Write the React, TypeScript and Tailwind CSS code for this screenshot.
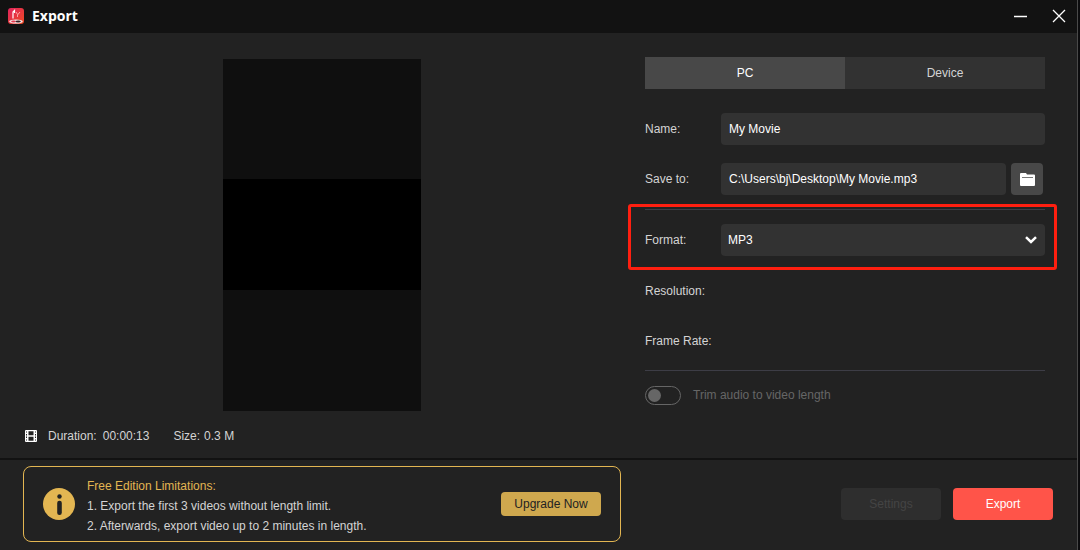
import React, { useState } from 'react';

const AppLogo: React.FC = () => (
  <svg width="16" height="16" viewBox="0 0 16 16" aria-hidden="true">
    <defs>
      <linearGradient id="logo-bg" x1="0" y1="0" x2="1" y2="1">
        <stop offset="0" stopColor="#e0245e" />
        <stop offset="1" stopColor="#ee4a22" />
      </linearGradient>
    </defs>
    <rect width="16" height="16" rx="3" fill="url(#logo-bg)" />
    <path d="M5 10.500V4L6.500 2.500V5" fill="none" stroke="#fff" strokeWidth="1.200" />
    <path d="M8 4l1.500 2.500M12 4l-2.500 3v2" fill="none" stroke="#ffb0b0" strokeWidth="0.900" />
    <ellipse cx="8" cy="13.500" rx="6.800" ry="2" fill="#f4e6e6" />
    <ellipse cx="5.500" cy="13.500" rx="2.400" ry="1" fill="#e53950" />
    <ellipse cx="10.200" cy="13.500" rx="2.600" ry="1" fill="#3a2024" />
  </svg>
);

const FilmIcon: React.FC = () => (
  <svg width="12" height="12" viewBox="0 0 12 12" aria-hidden="true">
    <rect width="12" height="12" rx="1" fill="#fff" />
    <path
      d="M1 1.500h1v1H1zM1 4h1v1.500H1zM1 6.500h1V8H1zM1 9.500h1v1H1zM10 1.500h1v1h-1zM10 4h1v1.500h-1zM10 6.500h1V8h-1zM10 9.500h1v1h-1zM3.500 1.200h5v4.100h-5zM3.500 6.700h5v4.100h-5z"
      fill="#222"
    />
  </svg>
);

const FolderIcon: React.FC = () => (
  <svg width="15" height="13" viewBox="0 0 15 13" aria-hidden="true">
    <path d="M1 0h5l1 1.500h7a1 1 0 0 1 1 1V12a1 1 0 0 1-1 1H1a1 1 0 0 1-1-1V1a1 1 0 0 1 1-1z" fill="#fff" />
    <path d="M2 4.500h11" stroke="#777" strokeWidth="1" />
  </svg>
);

const InfoIcon: React.FC = () => (
  <svg width="32" height="32" viewBox="0 0 32 32" aria-hidden="true">
    <circle cx="16" cy="16" r="16" fill="#e3b652" />
    <circle cx="16.500" cy="8.500" r="2.200" fill="#222" />
    <rect x="14.200" y="12.800" width="4.600" height="14.200" rx="2.200" fill="#222" />
  </svg>
);

const App: React.FC = () => {
  const [target, setTarget] = useState('PC');
  const [name, setName] = useState('My Movie');
  const [path, setPath] = useState('C:\\Users\\bj\\Desktop\\My Movie.mp3');

  return (
    <div className="flex min-h-screen bg-[#0c0c0e] pr-[2px] font-['Liberation_Sans',Arial,sans-serif] text-[12px] leading-5 text-[#d4d4d4]">
      <div className="flex flex-1 flex-col border-r border-[#4a4a4a] bg-[#222222]">
        {/* Title bar */}
        <header className="flex h-[33px] items-center bg-[#121212] pr-[6px] pb-[2px] pl-2">
          <AppLogo />
          <h1 className="ml-2 flex-1 font-['Open_Sans','Noto_Sans',sans-serif] text-[14px] font-bold text-white">Export</h1>
          <button aria-label="Minimize" className="flex size-6 items-center justify-center">
            <svg width="14" height="14" viewBox="0 0 14 14">
              <path d="M0 7.500h13" stroke="#fff" strokeWidth="1.500" />
            </svg>
          </button>
          <button aria-label="Close" className="ml-[14px] flex size-6 items-center justify-center">
            <svg width="14" height="14" viewBox="0 0 14 14">
              <path d="M1 1l12 12M13 1L1 13" stroke="#fff" strokeWidth="1.300" />
            </svg>
          </button>
        </header>

        <main className="flex flex-1 border-b-2 border-[#121212]">
          {/* Preview */}
          <section className="flex flex-1 flex-col pt-[26px] pr-[2px] pb-3">
            <div className="h-[352px] w-[198px] self-center bg-[#0f0f0f] pt-[120px]">
              <div className="h-[111px] bg-black" />
            </div>
            <div className="mt-auto flex items-center pl-[25px]">
              <FilmIcon />
              <span className="ml-[11px]">Duration:</span>
              <span className="ml-[6px]">00:00:13</span>
              <span className="ml-6">Size:</span>
              <span className="ml-1">0.3 M</span>
            </div>
          </section>

          {/* Settings */}
          <section className="mr-8 w-[400px] pt-6">
            <div className="grid grid-cols-2">
              {['PC', 'Device'].map((item) => (
                <button
                  key={item}
                  onClick={() => setTarget(item)}
                  className={target === item ? 'h-8 bg-[#484848] text-white' : 'h-8 bg-[#323232]'}
                >
                  {item}
                </button>
              ))}
            </div>

            <div className="mt-6 flex items-center">
              <label htmlFor="name" className="w-[76px]">Name:</label>
              <input
                id="name"
                value={name}
                onChange={(e) => setName(e.target.value)}
                className="h-8 min-w-0 flex-1 rounded bg-[#323232] px-2 text-white"
              />
            </div>

            <div className="mt-[18px] flex items-center pr-[2px]">
              <label htmlFor="path" className="w-[76px]">Save to:</label>
              <input
                id="path"
                value={path}
                onChange={(e) => setPath(e.target.value)}
                className="h-8 min-w-0 flex-1 rounded bg-[#323232] px-2 text-white"
              />
              <button aria-label="Browse" className="ml-[5px] flex size-8 items-center justify-center rounded bg-[#484848]">
                <FolderIcon />
              </button>
            </div>

            <hr className="mt-[14px] border-[#3d3d46]" />

            <div className="relative mt-[14px] flex items-center">
              <label htmlFor="format" className="w-[76px]">Format:</label>
              <div className="grid flex-1 items-center">
                <select
                  id="format"
                  className="col-start-1 row-start-1 h-8 w-full appearance-none rounded bg-[#323232] px-[7px] text-white"
                >
                  <option>MP3</option>
                </select>
                <svg
                  width="12"
                  height="8"
                  viewBox="0 0 12 8"
                  aria-hidden="true"
                  className="pointer-events-none col-start-1 row-start-1 mr-2 justify-self-end"
                >
                  <path d="M1 1.200l5 4.800 5-4.800" fill="none" stroke="#fff" strokeWidth="2.500" />
                </svg>
              </div>
              <div className="pointer-events-none absolute -top-5 -right-3 -bottom-[14px] -left-[17px] rounded-[3px] border-3 border-[#ff1f10]" />
            </div>

            <p className="mt-[25px]">Resolution:</p>
            <p className="mt-[30px]">Frame Rate:</p>

            <hr className="mt-[19px] border-[#3d3d46]" />

            <label className="mt-[14px] flex items-center text-[#666666]">
              <input
                type="checkbox"
                role="switch"
                disabled
                className="flex h-[19px] w-9 appearance-none items-center rounded-full border border-[#666666] px-[2px] before:size-[13px] before:rounded-full before:bg-[#666666]"
              />
              <span className="ml-3">Trim audio to video length</span>
            </label>
          </section>
        </main>

        <footer className="flex items-center justify-between pt-[6px] pr-6 pb-2 pl-[23px]">
          <div className="flex h-[76px] w-[598px] items-center rounded-lg border border-[#e3b652] px-[19px]">
            <InfoIcon />
            <div className="ml-3 flex-1 pt-1">
              <p className="text-[#e3b652]">Free Edition Limitations:</p>
              <p>1. Export the first 3 videos without length limit.</p>
              <p>2. Afterwards, export video up to 2 minutes in length.</p>
            </div>
            <button className="h-6 w-[100px] rounded bg-[#cfa84e] text-[#222222]">Upgrade Now</button>
          </div>
          <div className="flex gap-3">
            <button disabled className="h-8 w-[100px] rounded bg-[#2e2e2e] text-[#444444]">Settings</button>
            <button className="h-8 w-[100px] rounded bg-[#ff5449] text-white">Export</button>
          </div>
        </footer>
      </div>
    </div>
  );
};

export default App;
